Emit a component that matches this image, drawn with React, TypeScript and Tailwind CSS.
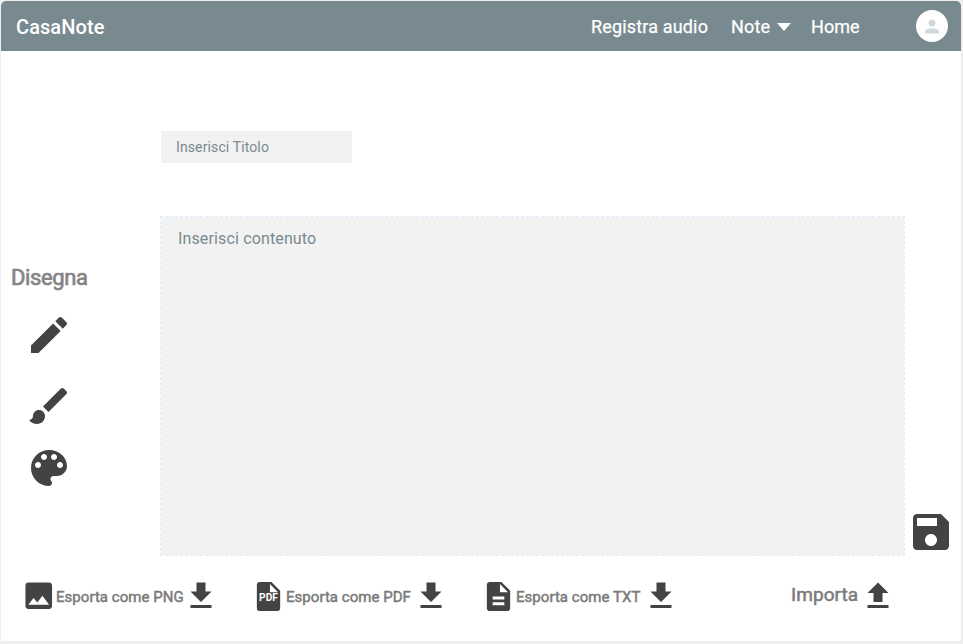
import React from "react";

type IconProps = { d: string; className: string; children?: React.ReactNode };

function Icon({ d, className, children }: IconProps) {
  return (
    <svg viewBox="0 0 24 24" fill="currentColor" className={`block shrink-0 text-[#434343] ${className}`}>
      <path d={d} />
      {children}
    </svg>
  );
}

const EDIT =
  "M3 17.25V21h3.75L17.81 9.94l-3.75-3.75L3 17.25zM20.71 7.04c.39-.39.39-1.02 0-1.41l-2.34-2.34c-.39-.39-1.02-.39-1.41 0l-1.83 1.83 3.75 3.75 1.83-1.83z";
const BRUSH =
  "M7 14c-1.66 0-3 1.34-3 3 0 1.31-1.16 2-2 2 .92 1.22 2.49 2 4 2 2.21 0 4-1.79 4-4 0-1.66-1.34-3-3-3zm13.71-9.37l-1.34-1.34c-.39-.39-1.02-.39-1.41 0L9 12.25 11.75 15l8.96-8.96c.39-.39.39-1.02 0-1.41z";
const PALETTE =
  "M12 3c-4.97 0-9 4.03-9 9s4.03 9 9 9c.83 0 1.5-.67 1.5-1.5 0-.39-.15-.74-.39-1.01-.23-.26-.38-.61-.38-.99 0-.83.67-1.5 1.5-1.5H16c2.76 0 5-2.24 5-5 0-4.42-4.03-8-9-8zm-5.5 9c-.83 0-1.5-.67-1.5-1.5S5.67 9 6.5 9 8 9.67 8 10.5 7.33 12 6.5 12zm3-4C8.67 8 8 7.33 8 6.5S8.67 5 9.5 5s1.5.67 1.5 1.5S10.33 8 9.5 8zm5 0c-.83 0-1.5-.67-1.5-1.5S13.67 5 14.5 5s1.5.67 1.5 1.5S15.33 8 14.5 8zm3 4c-.83 0-1.5-.67-1.5-1.5S16.67 9 17.5 9s1.5.67 1.5 1.5-.67 1.5-1.5 1.5z";
const SAVE =
  "M17 3H5c-1.11 0-2 .9-2 2v14c0 1.1.89 2 2 2h14c1.1 0 2-.9 2-2V7l-4-4zm-5 16c-1.66 0-3-1.34-3-3s1.34-3 3-3 3 1.34 3 3-1.34 3-3 3zm3-10H5V5h10v4z";
const IMAGE =
  "M21 19V5c0-1.1-.9-2-2-2H5c-1.1 0-2 .9-2 2v14c0 1.1.9 2 2 2h14c1.1 0 2-.9 2-2zM8.5 13.5l2.5 3.01L14.5 12l4.5 6H5l3.5-4.5z";
const DOWNLOAD = "M19 9h-4V3H9v6H5l7 7 7-7zM5 18v2h14v-2H5z";
const UPLOAD = "M9 16h6v-6h4l-7-7-7 7h4zm-4 2h14v2H5z";
const FILE = "M14 2H6c-1.1 0-1.99.9-1.99 2L4 20c0 1.1.89 2 1.99 2H18c1.1 0 2-.9 2-2V8l-6-6zm-1 7V3.5L18.5 9H13z";
const DOCUMENT =
  "M14 2H6c-1.1 0-1.99.9-1.99 2L4 20c0 1.1.89 2 1.99 2H18c1.1 0 2-.9 2-2V8l-6-6zm2 16H8v-2h8v2zm0-4H8v-2h8v2zm-3-5V3.5L18.5 9H13z";
const PERSON =
  "M12 12c2.21 0 4-1.79 4-4s-1.79-4-4-4-4 1.79-4 4 1.79 4 4 4zm0 2c-2.67 0-8 1.34-8 4v2h16v-2c0-2.66-5.33-4-8-4z";

function Header() {
  return (
    <header className="flex h-[50px] shrink-0 items-center rounded-t-[5px] bg-[#788a8f] pl-[15px] pr-[13px] text-white">
      <h1 className="pt-[2px] text-[20px] leading-[50px] font-medium tracking-[0.08px]">CasaNote</h1>
      <nav className="ml-auto flex items-center pt-[2px] text-[18px] leading-[50px] tracking-[0.16px] [-webkit-text-stroke:0.25px_white]">
        <a className="w-[140px]">Registra audio</a>
        <a className="flex w-[80px] items-center">
          Note
          <svg viewBox="0 0 14 8" className="ml-[7px] h-[8px] w-[14px] fill-white">
            <path d="M0 0h14L7 8z" />
          </svg>
        </a>
        <a className="w-[105px] tracking-[0.05px]">Home</a>
      </nav>
      <div className="flex size-8 items-center justify-center rounded-full bg-white">
        <svg viewBox="0 0 24 24" className="size-[21px] -translate-x-[0.5px] fill-[#cfd8dc]">
          <path d={PERSON} />
        </svg>
      </div>
    </header>
  );
}

function Export({ label, icon }: { label: string; icon: React.ReactNode }) {
  return (
    <div className="flex w-[230px] items-center">
      <div className="w-[36px]">{icon}</div>
      <span className="w-[127px] pt-[2px] text-[15px] leading-5 tracking-[0.04px] whitespace-nowrap text-[#7b7b7b] [-webkit-text-stroke:0.5px_#7b7b7b]">
        {label}
      </span>
      <Icon d={DOWNLOAD} className="-mt-[1px] size-9" />
    </div>
  );
}

export default function App() {
  return (
    <div className="h-[644px] w-[963px] bg-[#eeeeee] pt-px pl-px font-['Roboto',sans-serif]">
      <div className="flex h-[640px] w-[960px] flex-col rounded-t-[5px] bg-white">
        <Header />
        <main className="flex h-[505px]">
          <aside className="flex w-[158px] flex-col pt-[213px] pl-[10px]">
            <h2 className="text-[22px] leading-[28px] tracking-[-0.38px] text-[#858585] [-webkit-text-stroke:0.7px_#858585]">
              Disegna
            </h2>
            <Icon d={EDIT} className="mt-[19px] ml-[14px] size-12" />
            <Icon d={BRUSH} className="mt-[23px] ml-[14px] size-12" />
            <Icon d={PALETTE} className="mt-[14px] ml-[14px] size-12" />
          </aside>
          <section className="flex w-[748px] flex-col pt-[80px]">
            <div className="ml-[2px] h-[32px] w-[191px] rounded-[1px] bg-[#f2f2f2] pl-[15px] text-[14px] leading-[32px] tracking-[0.12px] text-[#788a8f]">
              Inserisci Titolo
            </div>
            <div className="mt-[53px] ml-[1px] h-[340px] w-[745px] border border-dashed border-[#ddeeff] bg-[#f2f2f2] bg-clip-padding pt-[10px] pl-[17px] text-[16px] leading-[24px] tracking-[0.14px] text-[#788a8f]">
              Inserisci contenuto
            </div>
          </section>
          <Icon d={SAVE} className="mt-[457px] size-12" />
        </main>
        <footer className="flex h-[80px] items-center pl-[19px]">
          <Export label="Esporta come PNG" icon={<Icon d={IMAGE} className="ml-[0.5px] size-[35.5px]" />} />
          <Export
            label="Esporta come PDF"
            icon={
              <Icon d={FILE} className="ml-[0.5px] size-[35px]">
                <text x="12" y="14.8" textAnchor="middle" fontSize="7" fontWeight="700" fill="#fff">
                  PDF
                </text>
              </Icon>
            }
          />
          <Export label="Esporta come TXT" icon={<Icon d={DOCUMENT} className="ml-[0.5px] size-[35px]" />} />
          <div className="ml-[81px] flex items-center">
            <span className="-mt-[2px] w-[69px] text-[19px] leading-6 tracking-[0.06px] text-[#7b7b7b] [-webkit-text-stroke:0.5px_#7b7b7b]">
              Importa
            </span>
            <Icon d={UPLOAD} className="-mt-[1px] size-9" />
          </div>
        </footer>
      </div>
    </div>
  );
}
